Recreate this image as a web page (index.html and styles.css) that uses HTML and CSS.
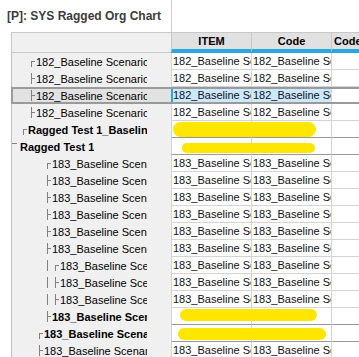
FILE: index.html
```html
<!DOCTYPE html>
<html lang="en">
<head>
    <meta charset="UTF-8">
    <meta name="viewport" content="width=device-width, initial-scale=1.0">
    <title>SYS Ragged Org Chart</title>
    <link rel="stylesheet" href="styles.css">
</head>
<body>
    <div class="title">[P]: SYS Ragged Org Chart</div>

    <div class="grid">
        <div class="head">
            <div class="head-tree"></div>
            <div class="head-col">ITEM</div>
            <div class="head-col">Code</div>
            <div class="head-col head-more">Code Description</div>
        </div>

        <!-- 182 group -->
        <div class="row">
            <div class="tree lv2"><i class="g first"></i><span class="name">182_Baseline Scenario 1</span></div>
            <div class="cell">182_Baseline Scenario 1</div>
            <div class="cell">182_Baseline Scenario 1</div>
            <div class="cell"></div>
        </div>
        <div class="row">
            <div class="tree lv2"><i class="g mid"></i><span class="name">182_Baseline Scenario 2</span></div>
            <div class="cell">182_Baseline Scenario 2</div>
            <div class="cell">182_Baseline Scenario 2</div>
            <div class="cell"></div>
        </div>
        <div class="row sel">
            <div class="tree lv2"><i class="g mid"></i><span class="name">182_Baseline Scenario 3</span></div>
            <div class="cell hl item">182_Baseline Scenario 3</div>
            <div class="cell hl">182_Baseline Scenario 3</div>
            <div class="cell"></div>
        </div>
        <div class="row">
            <div class="tree lv2"><i class="g mid"></i><span class="name">182_Baseline Scenario 4</span></div>
            <div class="cell">182_Baseline Scenario 4</div>
            <div class="cell">182_Baseline Scenario 4</div>
            <div class="cell"></div>
        </div>
        <div class="row group">
            <div class="tree lv1"><i class="g first"></i><span class="name">Ragged Test 1_Baseline</span></div>
            <div class="cell"></div>
            <div class="cell"></div>
            <div class="cell"></div>
            <span class="mark m1"></span>
        </div>
        <div class="row group">
            <div class="tree"><i class="g dash"></i><span class="name">Ragged Test 1</span></div>
            <div class="cell"></div>
            <div class="cell"></div>
            <div class="cell"></div>
            <span class="mark m2"></span>
        </div>

        <!-- 183 group -->
        <div class="row">
            <div class="tree lv4"><i class="g first"></i><span class="name">183_Baseline Scenario 1</span></div>
            <div class="cell">183_Baseline Scenario 1</div>
            <div class="cell">183_Baseline Scenario 1</div>
            <div class="cell"></div>
        </div>
        <div class="row">
            <div class="tree lv4"><i class="g mid"></i><span class="name">183_Baseline Scenario 2</span></div>
            <div class="cell">183_Baseline Scenario 2</div>
            <div class="cell">183_Baseline Scenario 2</div>
            <div class="cell"></div>
        </div>
        <div class="row">
            <div class="tree lv4"><i class="g mid"></i><span class="name">183_Baseline Scenario 3</span></div>
            <div class="cell">183_Baseline Scenario 3</div>
            <div class="cell">183_Baseline Scenario 3</div>
            <div class="cell"></div>
        </div>
        <div class="row">
            <div class="tree lv4"><i class="g mid"></i><span class="name">183_Baseline Scenario 4</span></div>
            <div class="cell">183_Baseline Scenario 4</div>
            <div class="cell">183_Baseline Scenario 4</div>
            <div class="cell"></div>
        </div>
        <div class="row">
            <div class="tree lv4"><i class="g mid"></i><span class="name">183_Baseline Scenario 5</span></div>
            <div class="cell">183_Baseline Scenario 5</div>
            <div class="cell">183_Baseline Scenario 5</div>
            <div class="cell"></div>
        </div>
        <div class="row">
            <div class="tree lv4"><i class="g mid"></i><span class="name">183_Baseline Scenario 6</span></div>
            <div class="cell">183_Baseline Scenario 6</div>
            <div class="cell">183_Baseline Scenario 6</div>
            <div class="cell"></div>
        </div>
        <div class="row">
            <div class="tree lv4"><i class="g pipe"></i><i class="g first"></i><span class="name">183_Baseline Scenario 7</span></div>
            <div class="cell">183_Baseline Scenario 7</div>
            <div class="cell">183_Baseline Scenario 7</div>
            <div class="cell"></div>
        </div>
        <div class="row">
            <div class="tree lv4"><i class="g pipe"></i><i class="g mid"></i><span class="name">183_Baseline Scenario 8</span></div>
            <div class="cell">183_Baseline Scenario 8</div>
            <div class="cell">183_Baseline Scenario 8</div>
            <div class="cell"></div>
        </div>
        <div class="row">
            <div class="tree lv4"><i class="g pipe"></i><i class="g mid"></i><span class="name">183_Baseline Scenario 9</span></div>
            <div class="cell">183_Baseline Scenario 9</div>
            <div class="cell">183_Baseline Scenario 9</div>
            <div class="cell"></div>
        </div>
        <div class="row group">
            <div class="tree lv4"><i class="g mid"></i><span class="name">183_Baseline Scenario</span></div>
            <div class="cell"></div>
            <div class="cell"></div>
            <div class="cell"></div>
            <span class="mark m3"></span>
        </div>
        <div class="row group">
            <div class="tree lv3"><i class="g first"></i><span class="name">183_Baseline Scenario</span></div>
            <div class="cell"></div>
            <div class="cell"></div>
            <div class="cell"></div>
            <span class="mark m4"></span>
        </div>
        <div class="row">
            <div class="tree lv3"><i class="g mid"></i><span class="name">183_Baseline Scenario 10</span></div>
            <div class="cell">183_Baseline Scenario 10</div>
            <div class="cell">183_Baseline Scenario 10</div>
            <div class="cell"></div>
        </div>
    </div>
</body>
</html>
```

FILE: styles.css
```css
body {
    margin: 0;
    font-family: "Liberation Sans", Arial, sans-serif;
    font-size: 11px;
    color: #000;
    background: #fff;
    overflow: hidden;
}

.title {
    width: 172px;
    height: 32px;
    box-sizing: border-box;
    padding: 9px 0 0 7px;
    border-right: 1px solid #d0d0d0;
    font-size: 12px;
    font-weight: bold;
    line-height: 14px;
    color: #3c3c3c;
    white-space: nowrap;
}

.grid {
    margin-left: 11px;
    width: 420px;
}

.head,
.row {
    display: grid;
    grid-template-columns: 160px 80px 80px 1fr;
}

/* header */
.head-tree {
    height: 19px;
    background: #f0f0f0;
    border: 1px solid #c8c8c8;
    border-right: 0;
}

.head-col {
    height: 16px;
    line-height: 16px;
    background: #e1e1e1;
    border-top: 1px solid #c8c8c8;
    border-left: 1px solid #c8c8c8;
    border-bottom: 4px solid #29a8e0;
    font-weight: bold;
    text-align: center;
    white-space: nowrap;
    overflow: hidden;
}

.head-more {
    text-align: left;
    padding-left: 2px;
}

/* rows */
.row {
    height: 17px;
    position: relative;
}

.tree {
    display: flex;
    align-items: center;
    min-width: 0;
    padding-right: 24px;
    background: #f0f0f0;
    border-left: 1px solid #c0c0c0;
    overflow: hidden;
}

.lv1 { padding-left: 8px; }
.lv2 { padding-left: 16px; }
.lv3 { padding-left: 24px; }
.lv4 { padding-left: 32px; }

.name {
    min-width: 0;
    line-height: 16px;
    white-space: nowrap;
    overflow: hidden;
}

.cell {
    padding-left: 1px;
    line-height: 16px;
    color: #111;
    background: #fff;
    border-left: 1px solid #d4d4d4;
    border-bottom: 1px solid #d4d4d4;
    white-space: nowrap;
    overflow: hidden;
}

/* tree connector lines */
.g {
    flex: none;
    width: 8px;
    height: 11px;
}

.g.first {
    background:
        linear-gradient(#808080, #808080) 3px 5px / 1px 6px no-repeat,
        linear-gradient(#808080, #808080) 3px 5px / 4px 1px no-repeat;
}

.g.mid {
    background:
        linear-gradient(#808080, #808080) 3px 0 / 1px 11px no-repeat,
        linear-gradient(#808080, #808080) 3px 5px / 4px 1px no-repeat;
}

.g.pipe {
    background: linear-gradient(#808080, #808080) 3px 0 / 1px 11px no-repeat;
}

.g.dash {
    background: linear-gradient(#808080, #808080) 0 2px / 5px 1px no-repeat;
}

/* group (roll-up) rows */
.row.group .name {
    font-weight: bold;
}

.row.group .cell {
    border-bottom-color: #999;
}

/* selected row */
.row.sel {
    outline: 2px solid #9a9a9a;
    outline-offset: -2px;
}

.row.sel .tree {
    background: #e2e2e2;
}

.row.sel .cell.hl {
    background: #cce8ff;
}

.row.sel .cell.item {
    border-left-color: #29a8e0;
    box-shadow: inset 1px 0 #29a8e0;
}

/* yellow marker strokes drawn over the hidden values */
.mark {
    position: absolute;
    background: #ffe600;
    border-radius: 8px;
}

.m1 { left: 162px; top: 1px; width: 143px; height: 15px; }
.m2 { left: 171px; top: 5px; width: 133px; height: 10px; border-radius: 5px; }
.m3 { left: 169px; top: 1px; width: 137px; height: 12px; border-radius: 6px; }
.m4 { left: 167px; top: 3px; width: 148px; height: 12px; border-radius: 6px; }
```
